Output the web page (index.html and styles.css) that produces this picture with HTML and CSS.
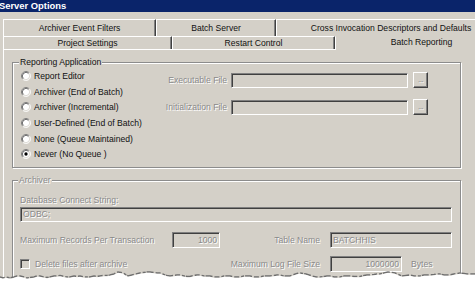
FILE: index.html
```html
<!DOCTYPE html>
<html>
<head>
<meta charset="utf-8">
<link rel="stylesheet" href="styles.css">
</head>
<body>
<div class="win">
  <div class="titlebar">Server Options</div>
  <div class="tabs">
    <div class="tabrow row1">
      <div class="tab w-aef">Archiver Event Filters</div>
      <div class="tab w-bs">Batch Server</div>
      <div class="tab w-cid">Cross Invocation Descriptors and Defaults</div>
    </div>
    <div class="tabrow row2">
      <div class="tab w-ps">Project Settings</div>
      <div class="tab w-rc">Restart Control</div>
      <div class="tab w-br selected">Batch Reporting</div>
    </div>
  </div>
  <div class="panel">
    <div class="group g-report">
      <div class="legend">Reporting Application</div>
      <div class="report-body">
        <div class="radios">
          <div class="radio-row"><svg class="radio" viewBox="0 0 12 12"><circle cx="6" cy="6" r="5" fill="#fff"/><path d="M2.11 9.89 A5.5 5.5 0 0 1 9.89 2.11" stroke="#808080" fill="none"/><path d="M2.82 9.18 A4.5 4.5 0 0 1 9.18 2.82" stroke="#404040" fill="none"/><path d="M9.89 2.11 A5.5 5.5 0 0 1 2.11 9.89" stroke="#ffffff" fill="none"/><path d="M9.18 2.82 A4.5 4.5 0 0 1 2.82 9.18" stroke="#d4d0c8" fill="none"/></svg><span>Report Editor</span></div>
          <div class="radio-row"><svg class="radio" viewBox="0 0 12 12"><circle cx="6" cy="6" r="5" fill="#fff"/><path d="M2.11 9.89 A5.5 5.5 0 0 1 9.89 2.11" stroke="#808080" fill="none"/><path d="M2.82 9.18 A4.5 4.5 0 0 1 9.18 2.82" stroke="#404040" fill="none"/><path d="M9.89 2.11 A5.5 5.5 0 0 1 2.11 9.89" stroke="#ffffff" fill="none"/><path d="M9.18 2.82 A4.5 4.5 0 0 1 2.82 9.18" stroke="#d4d0c8" fill="none"/></svg><span>Archiver (End of Batch)</span></div>
          <div class="radio-row"><svg class="radio" viewBox="0 0 12 12"><circle cx="6" cy="6" r="5" fill="#fff"/><path d="M2.11 9.89 A5.5 5.5 0 0 1 9.89 2.11" stroke="#808080" fill="none"/><path d="M2.82 9.18 A4.5 4.5 0 0 1 9.18 2.82" stroke="#404040" fill="none"/><path d="M9.89 2.11 A5.5 5.5 0 0 1 2.11 9.89" stroke="#ffffff" fill="none"/><path d="M9.18 2.82 A4.5 4.5 0 0 1 2.82 9.18" stroke="#d4d0c8" fill="none"/></svg><span>Archiver (Incremental)</span></div>
          <div class="radio-row"><svg class="radio" viewBox="0 0 12 12"><circle cx="6" cy="6" r="5" fill="#fff"/><path d="M2.11 9.89 A5.5 5.5 0 0 1 9.89 2.11" stroke="#808080" fill="none"/><path d="M2.82 9.18 A4.5 4.5 0 0 1 9.18 2.82" stroke="#404040" fill="none"/><path d="M9.89 2.11 A5.5 5.5 0 0 1 2.11 9.89" stroke="#ffffff" fill="none"/><path d="M9.18 2.82 A4.5 4.5 0 0 1 2.82 9.18" stroke="#d4d0c8" fill="none"/></svg><span>User-Defined (End of Batch)</span></div>
          <div class="radio-row"><svg class="radio" viewBox="0 0 12 12"><circle cx="6" cy="6" r="5" fill="#fff"/><path d="M2.11 9.89 A5.5 5.5 0 0 1 9.89 2.11" stroke="#808080" fill="none"/><path d="M2.82 9.18 A4.5 4.5 0 0 1 9.18 2.82" stroke="#404040" fill="none"/><path d="M9.89 2.11 A5.5 5.5 0 0 1 2.11 9.89" stroke="#ffffff" fill="none"/><path d="M9.18 2.82 A4.5 4.5 0 0 1 2.82 9.18" stroke="#d4d0c8" fill="none"/></svg><span>None (Queue Maintained)</span></div>
          <div class="radio-row"><svg class="radio" viewBox="0 0 12 12"><circle cx="6" cy="6" r="5" fill="#fff"/><path d="M2.11 9.89 A5.5 5.5 0 0 1 9.89 2.11" stroke="#808080" fill="none"/><path d="M2.82 9.18 A4.5 4.5 0 0 1 9.18 2.82" stroke="#404040" fill="none"/><path d="M9.89 2.11 A5.5 5.5 0 0 1 2.11 9.89" stroke="#ffffff" fill="none"/><path d="M9.18 2.82 A4.5 4.5 0 0 1 2.82 9.18" stroke="#d4d0c8" fill="none"/><circle cx="6" cy="6" r="2" fill="#000"/></svg><span>Never (No Queue )</span></div>
        </div>
        <div class="files">
          <div class="frow"><span class="flabel disabled">Executable File</span><span class="field f-path"></span><span class="btn">...</span></div>
          <div class="frow"><span class="flabel disabled">Initialization File</span><span class="field f-path"></span><span class="btn">...</span></div>
        </div>
      </div>
    </div>
    <div class="group g-arch">
      <div class="legend disabled">Archiver</div>
      <div class="arch-body">
        <div class="dblabel disabled">Database Connect String:</div>
        <div class="field f-db disabled">ODBC;</div>
        <div class="arow arow1">
          <span class="alabel disabled">Maximum Records Per Transaction</span>
          <span class="field tall f-rec num disabled">1000</span>
          <span class="rlabel disabled">Table Name</span>
          <span class="field tall f-table disabled">BATCHHIS</span>
        </div>
        <div class="arow arow2">
          <span class="checkwrap"><span class="check"></span><span class="disabled">Delete files after archive</span></span>
          <span class="rlabel disabled">Maximum Log File Size</span>
          <span class="field tall f-log num disabled">1000000</span>
          <span class="bytes disabled">Bytes</span>
        </div>
      </div>
    </div>
  </div>
  <svg class="torn" viewBox="0 0 475 18" width="475" height="18">
    <defs><filter id="blur" x="-5%" y="-50%" width="110%" height="200%"><feGaussianBlur stdDeviation="0.7"/></filter></defs>
    <path d="M0,11 L3,12 L6,11 L10,12 L14,11 L17,10 L20,10 L24,11 L27,12 L30,11.5 L34,11 L37,10 L40,10 L44,11 L47,11.5 L50,11 L54,10 L57,10 L60,9.5 L64,10.5 L67,11 L70,11 L74,10 L77,10.5 L80,10 L84,11 L87,11 L90,11 L94,10 L97,10.5 L100,10 L104,9.5 L107,9.5 L110,9 L114,8 L118,6 L121,6.5 L123,7 L126,9 L128,10 L132,9 L136,8 L140,7 L144,6.5 L147,6 L150,6 L154,6.5 L157,7 L160,7 L164,8.5 L167,9.5 L170,10 L174,9.5 L177,9 L180,9 L184,10 L187,10.5 L190,10.5 L194,9.5 L197,9 L200,9 L204,10 L207,10 L210,10 L214,11 L217,11 L220,11 L224,10 L227,10 L230,10 L234,11 L237,11 L240,11 L244,10 L247,10 L250,10 L254,11 L257,11 L260,11 L264,10 L267,10 L270,10 L274,9.5 L277,9 L280,9 L284,10 L287,10 L290,10 L294,8.5 L297,7.5 L300,7 L303,7.5 L306,8 L309,9 L312,10 L316,11 L320,11 L324,10.5 L327,10 L330,10 L334,11 L337,11 L340,11 L344,10 L347,10 L350,10 L354,10.5 L357,10.5 L360,10.5 L364,9.5 L367,9 L370,9 L374,8.5 L377,8 L380,8 L384,7 L388,6 L392,6.5 L395,7 L398,8.5 L402,10 L406,9.5 L410,9 L414,10 L417,10 L420,10 L424,9 L427,9 L430,9 L434,8.5 L437,8 L440,8 L444,9 L447,9 L450,9 L454,8 L457,7.5 L460,7 L464,7.5 L467,8 L470,8 L475,8" fill="none" stroke="#6e6e6e" stroke-width="1.6" stroke-dasharray="5 2 3 1 7 2" filter="url(#blur)"/>
    <path d="M0,11 L3,12 L6,11 L10,12 L14,11 L17,10 L20,10 L24,11 L27,12 L30,11.5 L34,11 L37,10 L40,10 L44,11 L47,11.5 L50,11 L54,10 L57,10 L60,9.5 L64,10.5 L67,11 L70,11 L74,10 L77,10.5 L80,10 L84,11 L87,11 L90,11 L94,10 L97,10.5 L100,10 L104,9.5 L107,9.5 L110,9 L114,8 L118,6 L121,6.5 L123,7 L126,9 L128,10 L132,9 L136,8 L140,7 L144,6.5 L147,6 L150,6 L154,6.5 L157,7 L160,7 L164,8.5 L167,9.5 L170,10 L174,9.5 L177,9 L180,9 L184,10 L187,10.5 L190,10.5 L194,9.5 L197,9 L200,9 L204,10 L207,10 L210,10 L214,11 L217,11 L220,11 L224,10 L227,10 L230,10 L234,11 L237,11 L240,11 L244,10 L247,10 L250,10 L254,11 L257,11 L260,11 L264,10 L267,10 L270,10 L274,9.5 L277,9 L280,9 L284,10 L287,10 L290,10 L294,8.5 L297,7.5 L300,7 L303,7.5 L306,8 L309,9 L312,10 L316,11 L320,11 L324,10.5 L327,10 L330,10 L334,11 L337,11 L340,11 L344,10 L347,10 L350,10 L354,10.5 L357,10.5 L360,10.5 L364,9.5 L367,9 L370,9 L374,8.5 L377,8 L380,8 L384,7 L388,6 L392,6.5 L395,7 L398,8.5 L402,10 L406,9.5 L410,9 L414,10 L417,10 L420,10 L424,9 L427,9 L430,9 L434,8.5 L437,8 L440,8 L444,9 L447,9 L450,9 L454,8 L457,7.5 L460,7 L464,7.5 L467,8 L470,8 L475,8 L475,18 L0,18 Z" fill="#ffffff" transform="translate(0,0.8)"/>
  </svg>
</div>
</body>
</html>
```

FILE: styles.css
```css
html, body {
  margin: 0;
  padding: 0;
}
body {
  width: 475px;
  height: 284px;
  overflow: hidden;
  background: #d4d0c8;
  font-family: "Liberation Sans", Arial, sans-serif;
  font-size: 8.6px;
  color: #000;
}
.win {
  position: relative;
  width: 475px;
  height: 284px;
  overflow: hidden;
  background: #d4d0c8;
}
.titlebar {
  height: 12px;
  background: #0a246a;
  color: #fff;
  font-weight: bold;
  font-size: 9.4px;
  line-height: 11px;
  text-indent: -1px;
  white-space: nowrap;
}
.tabs {
  margin-top: 7px;
  padding-left: 3px;
  width: 700px;
}
.tabrow {
  display: flex;
  align-items: flex-start;
  white-space: nowrap;
}
.tab {
  box-sizing: border-box;
  flex: none;
  border-top: 1px solid #fff;
  border-left: 1px solid #fff;
  border-right: 1px solid #404040;
  box-shadow: inset -1px 0 0 #808080;
  text-align: center;
  color: #111;
}
.row1 { height: 17px; }
.row1 .tab { height: 17px; line-height: 16px; }
.row2 { height: 13px; }
.row2 .tab { height: 13px; line-height: 12px; }
.w-aef { width: 153px; }
.w-bs { width: 120px; }
.w-cid { width: 230px; }
.w-ps { width: 169px; }
.w-rc { width: 163px; }
.w-br { width: 173px; }
.row2 .tab.selected {
  position: relative;
  z-index: 1;
  height: 14px;
  line-height: 11px;
  border-top-color: #d4d0c8;
  background: #d4d0c8;
}
.panel {
  margin-left: 3px;
  width: 600px;
  height: 260px;
  border-top: 1px solid #fff;
  border-left: 1px solid #fff;
  padding: 12px 0 0 8px;
}
.group {
  box-sizing: border-box;
  width: 449px;
  border: 1px solid #8c8c8c;
  box-shadow: inset 1px 1px 0 #fff, 1px 1px 0 #fff;
}
.g-report { height: 106px; }
.g-arch { height: 120px; margin-top: 12px; }
.legend {
  width: max-content;
  background: #d4d0c8;
  padding: 0 1px;
  margin-top: -7px;
  line-height: 12px;
  height: 12px;
  color: #111;
}
.g-report .legend { margin-left: 6px; }
.g-arch .legend { margin-left: 5px; }
.disabled {
  color: #8a8a8a;
  text-shadow: 1px 1px 0 #fff;
}
.report-body {
  display: flex;
  padding-left: 7px;
}
.radios {
  width: 140px;
  flex: none;
}
.radio-row {
  height: 15.7px;
  display: flex;
  align-items: center;
  white-space: nowrap;
  color: #111;
}
.radio {
  width: 10px;
  height: 10px;
  flex: none;
  margin: 0 3px 0 1px;
}
.files {
  margin-top: 4px;
  display: flex;
  flex-direction: column;
  gap: 11px;
}
.frow {
  display: flex;
  align-items: center;
  height: 16px;
}
.flabel {
  width: 67px;
  text-align: right;
  white-space: nowrap;
}
.field {
  box-sizing: border-box;
  display: block;
  height: 15px;
  background: #d4d0c8;
  border-top: 1px solid #808080;
  border-left: 1px solid #808080;
  border-bottom: 1px solid #fff;
  border-right: 1px solid #fff;
  box-shadow: inset 1px 1px 0 #404040, inset -1px -1px 0 #d4d0c8;
  line-height: 13px;
  padding: 0 2px;
  white-space: nowrap;
  overflow: hidden;
  flex: none;
}
.field.tall {
  height: 16px;
  line-height: 14px;
}
.field.num { text-align: right; }
.f-path {
  width: 177px;
  margin-left: 4px;
  margin-top: 1px;
}
.btn {
  box-sizing: border-box;
  flex: none;
  width: 15px;
  height: 16px;
  margin-left: 5px;
  border-top: 1px solid #fff;
  border-left: 1px solid #fff;
  border-right: 1px solid #404040;
  border-bottom: 1px solid #404040;
  box-shadow: inset -1px -1px 0 #808080;
  text-align: center;
  line-height: 14px;
  font-size: 8px;
  letter-spacing: -0.5px;
  color: #8a8a8a;
  text-shadow: 1px 1px 0 #fff;
}
.arch-body {
  padding-left: 7px;
}
.dblabel {
  margin-top: 8px;
  line-height: 12px;
  height: 12px;
  white-space: nowrap;
}
.f-db {
  width: 432px;
  margin-top: 1px;
}
.arow {
  display: flex;
  align-items: center;
  height: 16px;
  white-space: nowrap;
}
.arow1 { margin-top: 10px; }
.arow2 { margin-top: 8px; }
.alabel {
  width: 152px;
  flex: none;
}
.f-rec { width: 48px; }
.rlabel {
  width: 100px;
  flex: none;
  text-align: right;
  margin-right: 10px;
}
.f-table { width: 122px; }
.checkwrap {
  width: 200px;
  flex: none;
  display: flex;
  align-items: center;
}
.check {
  box-sizing: border-box;
  width: 10px;
  height: 10px;
  flex: none;
  margin-right: 5px;
  border-top: 1px solid #808080;
  border-left: 1px solid #808080;
  border-right: 1px solid #fff;
  border-bottom: 1px solid #fff;
  box-shadow: inset 1px 1px 0 #404040;
  background: #d4d0c8;
}
.f-log { width: 72px; }
.bytes { margin-left: 9px; }
.torn {
  position: absolute;
  left: 0;
  bottom: 0;
  display: block;
}
```
